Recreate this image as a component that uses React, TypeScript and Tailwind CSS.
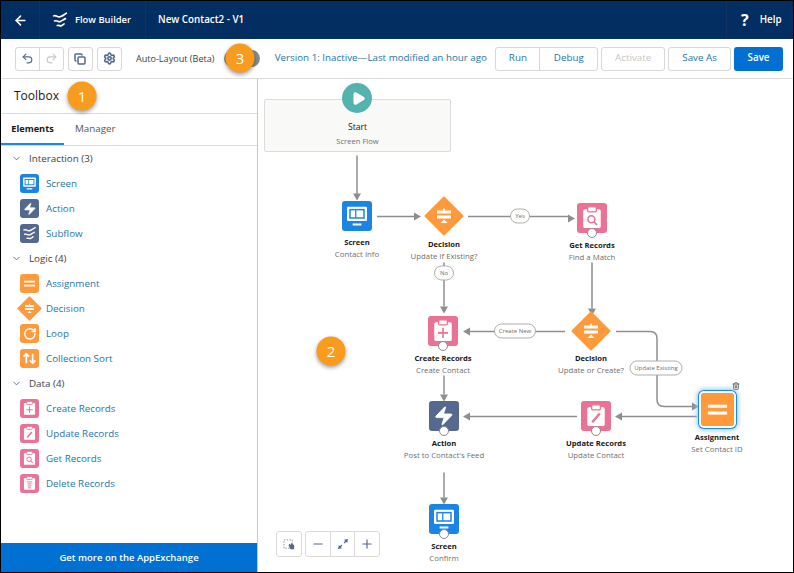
import React from 'react'

import { ArrowLeft, ChevronDown, Copy, Minus, Play, Plus, Redo2, RotateCw, Settings, Trash2, Undo2, Zap } from 'lucide-react'

const BLUE = '#0070d2'
const canvasX = 258
const canvasY = 79

type Glyph = 'screen' | 'action' | 'subflow' | 'assign' | 'decision' | 'loop' | 'sort' | 'create' | 'update' | 'get' | 'delete'

const tileColors: Record<Glyph, string> = {
  screen: 'bg-[#1b84e4]',
  action: 'bg-[#54698d]',
  subflow: 'bg-[#54698d]',
  assign: 'bg-[#ff9a3c]',
  decision: 'bg-transparent',
  loop: 'bg-[#ff9a3c]',
  sort: 'bg-[#ff9a3c]',
  create: 'bg-[#ea7295]',
  update: 'bg-[#ea7295]',
  get: 'bg-[#ea7295]',
  delete: 'bg-[#ea7295]',
}

const FlowLines = ({ color = 'white' }: { color?: string }) => (
  <g fill="none" stroke={color} strokeLinecap="round" strokeWidth="1.8">
    <path d="M5 7.5c3-1.5 4 2 7 1s4-2 7-4" />
    <path d="M6 13c3-1 4 1.500 6 .8s3-2 6-3.300" />
    <path d="M9 18c2-.5 3 .8 4.500.2s1.500-1 3-2" />
  </g>
)

const Clipboard = ({ children }: { children?: React.ReactNode }) => (
  <g>
    <rect x="5" y="5" width="14" height="15" rx="1.5" fill="white" />
    <rect x="8.5" y="3" width="7" height="4" rx="1" fill="white" stroke="#ea7295" strokeWidth="1" />
    {children}
  </g>
)

const DecisionLines = () => (
  <g fill="white">
    <rect x="5" y="6.500" width="14" height="3" rx="0.5" />
    <rect x="5" y="11.500" width="14" height="3" rx="0.5" />
    <rect x="11.200" y="4.500" width="1.600" height="2" />
    <path d="M12 15.500l3.500 3.500h-7z" />
  </g>
)

// toolbox and canvas share the same icon drawings, only the tile size differs
const GlyphIcon = ({ name }: { name: Glyph }) => {
  if (name === 'loop') return <RotateCw className="size-[72%]" color="white" strokeWidth={2.6} />
  if (name === 'action') return <Zap className="size-[72%]" color="white" fill="white" strokeWidth={1} />
  return (
    <svg className="size-full" viewBox="0 0 24 24">
      {name === 'screen' ? (
        <g>
          <rect x="4" y="4.500" width="16" height="11.500" rx="1" fill="white" />
          <rect x="5.800" y="6.300" width="12.400" height="7.900" fill="#1b84e4" />
          <rect x="7" y="7.500" width="3.500" height="5.500" fill="white" />
          <rect x="11.500" y="7.500" width="5.500" height="5.500" fill="white" />
          <rect x="8.500" y="18" width="7" height="1.600" fill="white" />
        </g>
      ) : null}
      {name === 'subflow' ? <FlowLines /> : null}
      {name === 'assign' ? (
        <g fill="white">
          <rect x="5" y="8.500" width="14" height="2.200" />
          <rect x="5" y="13.500" width="14" height="2.200" />
        </g>
      ) : null}
      {name === 'sort' ? (
        <g fill="none" stroke="white" strokeWidth="2.200">
          <path d="M8 18V6M4.500 9.500L8 6l3.500 3.500" />
          <path d="M16 6v12M12.500 14.500L16 18l3.500-3.500" />
        </g>
      ) : null}
      {name === 'create' ? (
        <Clipboard>
          <path d="M12 9.500v8M8 13.500h8" stroke="#ea7295" strokeWidth="1.300" />
        </Clipboard>
      ) : null}
      {name === 'update' ? (
        <Clipboard>
          <path d="M9 17l6-7" stroke="#ea7295" strokeWidth="2" />
        </Clipboard>
      ) : null}
      {name === 'get' ? (
        <Clipboard>
          <circle cx="11.500" cy="13" r="2.800" fill="none" stroke="#ea7295" strokeWidth="1.200" />
          <path d="M13.500 15l2.500 2.500" stroke="#ea7295" strokeWidth="1.300" />
        </Clipboard>
      ) : null}
      {name === 'delete' ? (
        <Clipboard>
          <path d="M8.500 10h7M9.500 12.500h5M9.500 15h5M10 17.500h4" stroke="#ea7295" strokeWidth="1.200" />
        </Clipboard>
      ) : null}
    </svg>
  )
}

const Diamond = () => (
  <svg className="size-full" viewBox="0 0 40 40">
    <path d="M20 1.500L38.500 20 20 38.500 1.500 20z" fill="#ff9a3c" stroke="#ff9a3c" strokeLinejoin="round" strokeWidth="2" />
    <g transform="translate(8 8)">
      <DecisionLines />
    </g>
  </svg>
)

const ToolIcon = ({ name }: { name: Glyph }) =>
  name === 'decision' ? (
    <div className="-mx-[3px] size-[25px] shrink-0">
      <Diamond />
    </div>
  ) : (
    <div className={`flex size-[19px] shrink-0 items-center justify-center rounded-[3px] ${tileColors[name]}`}>
      <GlyphIcon name={name} />
    </div>
  )

const sections: { title: string; items: [Glyph, string][] }[] = [
  {
    title: 'Interaction (3)',
    items: [
      ['screen', 'Screen'],
      ['action', 'Action'],
      ['subflow', 'Subflow'],
    ],
  },
  {
    title: 'Logic (4)',
    items: [
      ['assign', 'Assignment'],
      ['decision', 'Decision'],
      ['loop', 'Loop'],
      ['sort', 'Collection Sort'],
    ],
  },
  {
    title: 'Data (4)',
    items: [
      ['create', 'Create Records'],
      ['update', 'Update Records'],
      ['get', 'Get Records'],
      ['delete', 'Delete Records'],
    ],
  },
]

type FlowNode = {
  glyph: Glyph
  cx: number
  top: number
  gap: number
  title: string
  sub: string
  size?: number
  connector?: boolean
  selected?: boolean
}

const nodes: FlowNode[] = [
  { glyph: 'screen', cx: 357, top: 201, gap: 5, title: 'Screen', sub: 'Contact Info' },
  { glyph: 'decision', cx: 444, top: 196, gap: 2, size: 40, title: 'Decision', sub: 'Update If Existing?' },
  { glyph: 'get', cx: 592, top: 203, gap: 6, connector: true, title: 'Get Records', sub: 'Find a Match' },
  { glyph: 'create', cx: 443, top: 316, gap: 6, connector: true, title: 'Create Records', sub: 'Create Contact' },
  { glyph: 'decision', cx: 591, top: 311, gap: 1, size: 40, title: 'Decision', sub: 'Update or Create?' },
  { glyph: 'action', cx: 444, top: 401, gap: 6, connector: true, title: 'Action', sub: "Post to Contact's Feed" },
  { glyph: 'update', cx: 596, top: 401, gap: 6, connector: true, title: 'Update Records', sub: 'Update Contact' },
  { glyph: 'assign', cx: 717, top: 393, gap: 5, size: 33, selected: true, title: 'Assignment', sub: 'Set Contact ID' },
  { glyph: 'screen', cx: 444, top: 504, gap: 6, connector: true, title: 'Screen', sub: 'Confirm' },
]

const pills = [
  { cx: 520, cy: 216, w: 20, label: 'Yes' },
  { cx: 444, cy: 273, w: 20, label: 'No' },
  { cx: 515, cy: 331, w: 42, label: 'Create New' },
  { cx: 656, cy: 368, w: 53, label: 'Update Existing' },
]

const lines = [
  'M357 155V194',
  'M377 216H414',
  'M468 216H568',
  'M444 262V306',
  'M592 262V308',
  'M565 331H470',
  'M616 331H650Q657 331 657 338V399Q657 406 664 406H692',
  'M444 375V394',
  'M577 416H470',
  'M697 416H622',
  'M444 472V497',
]

const arrows = [
  '353,193 361,193 357,200',
  '414,212 414,220 421,216',
  '568,214 568,222 575,218',
  '440,306 448,306 444,313',
  '588,308 596,308 592,315',
  '470,327 470,335 463,331',
  '692,402 692,410 699,406',
  '440,394 448,394 444,401',
  '470,412 470,420 463,416',
  '622,412 622,420 615,416',
  '440,497 448,497 444,504',
]

const Node = ({ node }: { node: FlowNode }) => {
  const size = node.size ?? 30

  return (
    <div
      className="absolute flex w-[110px] -translate-x-1/2 flex-col items-center text-center"
      style={{ left: node.cx - canvasX, top: node.top - canvasY }}
    >
      <div className="relative" style={{ width: size, height: size, marginBottom: node.gap }}>
        {node.glyph === 'decision' ? (
          <Diamond />
        ) : (
          <div
            className={`flex size-full items-center justify-center rounded-[3px] ${tileColors[node.glyph]} ${
              node.selected ? 'outline-2 outline-white shadow-[0_0_0_3px_#1589ee,0_0_5px_4px_#8fc7f7]' : ''
            }`}
          >
            <GlyphIcon name={node.glyph} />
          </div>
        )}
        {node.connector ? (
          <div className="absolute -bottom-[5px] left-1/2 size-[10px] -translate-x-1/2 rounded-full border border-[#8a8a8a] bg-white" />
        ) : null}
        {node.selected ? <Trash2 className="absolute -right-[6px] -top-[11px] size-2 text-[#706e6b]" strokeWidth={3} /> : null}
      </div>
      <div className="text-[7.6px] font-bold leading-[12px] text-[#181818]">{node.title}</div>
      <div className="w-[84px] text-[7.8px] leading-[12px] text-[#706e6b]">{node.sub}</div>
    </div>
  )
}

const Badge = ({ n, x, y }: { n: number; x: number; y: number }) => (
  <div
    className="absolute flex size-[29px] -translate-x-1/2 -translate-y-1/2 items-center justify-center rounded-full bg-[#f99b1d] text-[15px] text-white shadow-[0_2px_4px_rgba(0,0,0,0.4)]"
    style={{ left: x - 1, top: y - 1 }}
  >
    {n}
  </div>
)

const toolBtn = 'flex items-center justify-center h-6 rounded-[3px] border border-[#d8d8d8] bg-white'

export default function App() {
  return (
    <div className="relative flex h-[573px] w-[794px] flex-col overflow-hidden border border-black bg-white font-['Open_Sans',sans-serif] text-[9.8px]">
      <header className="flex h-[38px] shrink-0 items-center bg-[#032e61] font-semibold text-white">
        <div className="flex h-full w-[39px] items-center justify-center border-r border-[#16325c]">
          <ArrowLeft className="size-[15px]" strokeWidth={2.5} />
        </div>
        <div className="flex h-full w-[106px] items-center gap-[4px] border-r border-[#16325c] pl-[9px] text-[9.4px]">
          <svg className="size-[22px]" viewBox="0 0 24 24">
            <FlowLines />
          </svg>
          <span>Flow Builder</span>
        </div>
        <div className="flex-1 pl-[12px]">New Contact2 - V1</div>
        <div className="flex h-full w-[67px] items-center gap-[11px] border-l border-[#16325c] pl-[14px]">
          <span className="text-[16px] font-bold">?</span>
          <span>Help</span>
        </div>
      </header>

      <div className="flex h-[40px] shrink-0 items-center border-b border-[#dddbda] pl-[14px] pr-[10px]">
        <div className={`${toolBtn} w-[49px]`}>
          <div className="flex h-full flex-1 items-center justify-center border-r border-[#d8d8d8]">
            <Undo2 className="size-[13px] text-[#54698d]" />
          </div>
          <div className="flex h-full flex-1 items-center justify-center">
            <Redo2 className="size-[13px] text-[#c9c7c5]" />
          </div>
        </div>
        <div className={`${toolBtn} ml-[4px] w-[25px]`}>
          <Copy className="size-[12px] text-[#54698d]" strokeWidth={3} />
        </div>
        <div className={`${toolBtn} ml-[4px] w-[25px]`}>
          <Settings className="size-[13px] text-[#54698d]" strokeWidth={3} />
        </div>
        <span className="ml-[14px] w-[87px] text-[9.1px] text-[#3e3e3c]">Auto-Layout (Beta)</span>
        <div className="ml-[1px] h-[17px] w-[36px] rounded-full bg-[#8a8a8a]" />
        <span className="ml-[15px] w-[221px] whitespace-nowrap text-[#2574a9]">Version 1: Inactive—Last modified an hour ago</span>
        <div className={`${toolBtn} w-[103px] text-[#2574a9]`}>
          <div className="flex h-full w-[44px] items-center justify-center border-r border-[#d8d8d8]">Run</div>
          <div className="flex h-full flex-1 items-center justify-center">Debug</div>
        </div>
        <div className={`${toolBtn} ml-[3px] w-[64px] text-[#c9c7c5]`}>Activate</div>
        <div className={`${toolBtn} ml-[3px] w-[63px] text-[#2574a9]`}>Save As</div>
        <div className="ml-[3px] flex h-6 w-[49px] items-center justify-center rounded-[3px] bg-[#0070d2] font-semibold text-white">
          Save
        </div>
      </div>

      <div className="flex min-h-0 flex-1">
        <aside className="flex w-[257px] shrink-0 flex-col border-r border-[#c9c7c5]">
          <div className="flex h-[35px] shrink-0 items-center border-b border-[#dddbda] pl-[13px] text-[12px] text-[#181818]">Toolbox</div>
          <div className="flex h-[32px] shrink-0 border-b border-[#dddbda]">
            <div className="flex w-[63px] items-center justify-center border-b-2 border-[#1589ee] text-[9.2px] font-bold text-[#181818]">Elements</div>
            <div className="ml-[11px] flex items-center text-[#54585c]">Manager</div>
          </div>
          <div className="flex-1">
            {sections.map((section) => (
              <div key={section.title}>
                <div className="flex h-[25px] items-center pl-[10px] text-[#3e3e3c]">
                  <ChevronDown className="size-[11px] text-[#54698d]" />
                  <span className="ml-[7px] pt-[1px]">{section.title}</span>
                </div>
                {section.items.map(([glyph, label]) => (
                  <div className="flex h-[25px] items-center pl-[19px]" key={label}>
                    <ToolIcon name={glyph} />
                    <span className="ml-[7px] pt-[1px] text-[#2574a9]">{label}</span>
                  </div>
                ))}
              </div>
            ))}
          </div>
          <div className="flex h-[29px] shrink-0 items-center justify-center pt-[2px] text-[9.500px] font-semibold text-white" style={{ backgroundColor: BLUE }}>
            Get more on the AppExchange
          </div>
        </aside>

        <main className="relative min-w-0 flex-1">
          <svg className="absolute inset-0 size-full" viewBox={`${canvasX} ${canvasY} 535 492`}>
            {lines.map((d) => (
              <path d={d} fill="none" key={d} stroke="#8e8e8e" strokeWidth="1.500" />
            ))}
            {arrows.map((points) => (
              <polygon fill="#8e8e8e" key={points} points={points} />
            ))}
          </svg>

          <div className="absolute left-[6px] top-[20px] flex h-[53px] w-[187px] flex-col items-center justify-end rounded-[2px] border border-[#dddbda] bg-[#f9f9f8] pb-[3px] text-center">
            <span className="text-[8.600px] leading-[14px] text-[#181818]">Start</span>
            <span className="text-[7.600px] leading-[14px] text-[#706e6b]">Screen Flow</span>
          </div>
          <div className="absolute left-[84px] top-[4px] flex size-[30px] items-center justify-center rounded-full bg-[#54b3ae]">
            <Play className="ml-[2px] size-[15px]" color="white" fill="white" />
          </div>

          {nodes.map((node) => (
            <Node key={`${node.title}-${node.cx}`} node={node} />
          ))}

          {pills.map((pill) => (
            <div
              className="absolute flex h-[15px] -translate-x-1/2 -translate-y-1/2 items-center justify-center whitespace-nowrap rounded-full border border-[#b0adab] bg-white text-[6px] text-[#706e6b]"
              key={pill.label}
              style={{ left: pill.cx - canvasX, top: pill.cy - canvasY, width: pill.w }}
            >
              {pill.label}
            </div>
          ))}

          <div className="absolute bottom-[15px] left-[18px] flex gap-[3px]">
            <div className="flex h-[26px] w-[26px] items-center justify-center rounded-[3px] border border-[#dddbda] bg-white">
              <svg className="size-[13px]" viewBox="0 0 14 14">
                <rect x="1" y="2" width="9" height="9" fill="none" stroke="#8a8a8a" strokeDasharray="1.500 1.500" />
                <path d="M6 8l1-2 1 1.500 1-2 1 1 2 1v4.500H8z" fill="#54698d" />
              </svg>
            </div>
            <div className="flex h-[26px] w-[75px] rounded-[3px] border border-[#dddbda] bg-white text-[#54698d]">
              <div className="flex flex-1 items-center justify-center border-r border-[#dddbda]">
                <Minus className="size-[14px]" />
              </div>
              <div className="flex flex-1 items-center justify-center border-r border-[#dddbda]">
                <svg className="size-[12px]" viewBox="0 0 12 12">
                  <path d="M1 11l4-.8L1.800 7zM11 1L7 1.800 10.200 5z" fill="#54698d" />
                  <path d="M3 9l2-2M9 3L7 5" stroke="#54698d" strokeWidth="1.200" />
                </svg>
              </div>
              <div className="flex flex-1 items-center justify-center">
                <Plus className="size-[14px]" />
              </div>
            </div>
          </div>
        </main>
      </div>

      <Badge n={1} x={82} y={96} />
      <Badge n={2} x={331} y={351} />
      <Badge n={3} x={240} y={58} />
    </div>
  )
}
